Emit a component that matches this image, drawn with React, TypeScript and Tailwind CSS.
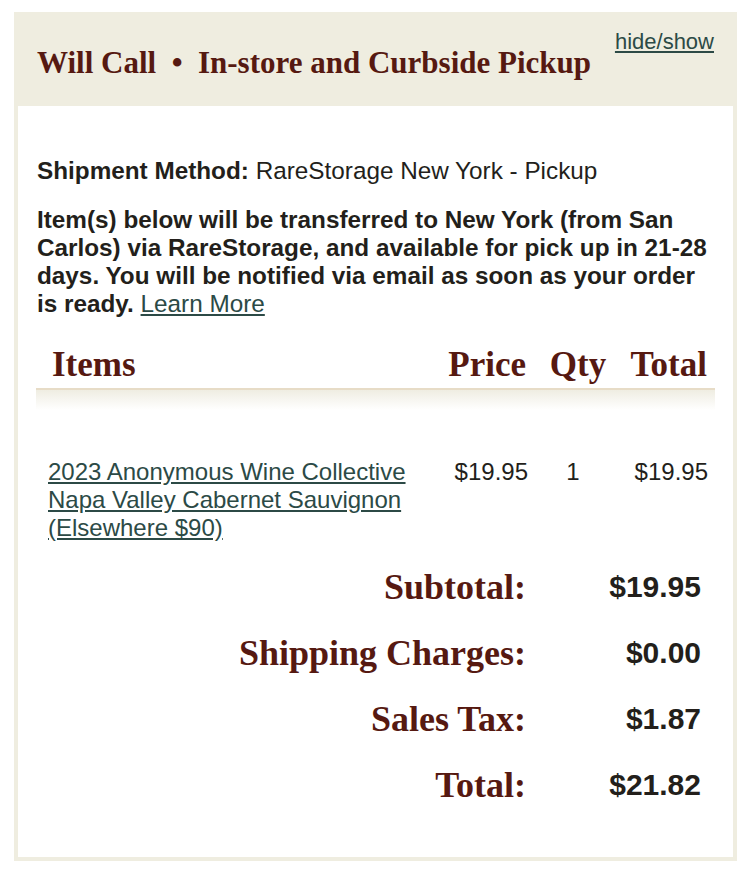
export default function App() {
  const sans = { fontFamily: '"Liberation Sans", Arial, sans-serif' };
  const serif = { fontFamily: '"Liberation Serif", "Times New Roman", serif' };

  const totals = [
    { label: "Subtotal:", value: "$19.95" },
    { label: "Shipping Charges:", value: "$0.00" },
    { label: "Sales Tax:", value: "$1.87" },
    { label: "Total:", value: "$21.82" },
  ];

  return (
    <div className="min-h-[876px] bg-white pt-[12px] pl-[14px]" style={sans}>
      <div className="w-[723px]">
        {/* header */}
        <div className="flex h-[94px] justify-between bg-[#efede0] pl-[23px] pr-[23px]">
          <h2
            className="pt-[32px] text-[31px] font-bold leading-[38px] text-[#561911]"
            style={serif}
          >
            Will Call&nbsp; •&nbsp; In-store and Curbside Pickup
          </h2>
          <a
            href="#"
            className="pt-[17px] text-[22px] leading-[26px] text-[#2c4a46] underline underline-offset-2"
          >
            hide/show
          </a>
        </div>

        {/* body */}
        <div className="border-[4px] border-t-0 border-[#efede0] bg-white pb-[52px] pl-[19px] pr-[18px] pt-[51px] text-[#231f1b]">
          <p className="text-[24.3px] leading-[28px]">
            <span className="font-bold">Shipment Method:</span> RareStorage New York - Pickup
          </p>
          <p className="mt-[21px] text-[24.3px] font-bold leading-[28px]">
            Item(s) below will be transferred to New York (from San
            <br />
            Carlos) via RareStorage, and available for pick up in 21-28
            <br />
            days. You will be notified via email as soon as your order
            <br />
            is ready.{" "}
            <a href="#" className="font-normal text-[#2c4a46] underline underline-offset-2">
              Learn More
            </a>
          </p>

          {/* table */}
          <div className="ml-[-1px] mt-[27px] w-[679px]">
            <div
              className="grid grid-cols-[412px_90px_80px_97px] items-end border-b-2 border-[#e7dcc7] pb-[3px] text-[35px] font-bold leading-[40px] text-[#561911]"
              style={serif}
            >
              <div className="pl-[16px]">Items</div>
              <div className="pr-[12px] text-right">Price</div>
              <div className="text-center">Qty</div>
              <div className="pr-[8px] text-right">Total</div>
            </div>
            <div className="h-[20px] bg-gradient-to-b from-[#efede2] to-white" />

            <div className="mt-[48px] grid grid-cols-[412px_90px_80px_97px] text-[24px] leading-[28px]">
              <div className="pl-[12px]">
                <a href="#" className="text-[#2c4a46] underline underline-offset-2">
                  2023 Anonymous Wine Collective
                  <br />
                  Napa Valley Cabernet Sauvignon
                  <br />
                  (Elsewhere $90)
                </a>
              </div>
              <div className="pr-[10px] text-right">$19.95</div>
              <div className="pr-[10px] text-center">1</div>
              <div className="pr-[7px] text-right">$19.95</div>
            </div>
          </div>

          {/* totals */}
          <div className="mt-[25px] flex flex-col gap-[26px] pr-[14px]">
            {totals.map((t) => (
              <div key={t.label} className="grid grid-cols-[1fr_175px] items-center">
                <div
                  className="text-right text-[36px] font-bold leading-[40px] text-[#561911]"
                  style={serif}
                >
                  {t.label}
                </div>
                <div className="text-right text-[30px] font-bold leading-[40px] text-[#231f1b]">
                  {t.value}
                </div>
              </div>
            ))}
          </div>
        </div>
      </div>
    </div>
  );
}
